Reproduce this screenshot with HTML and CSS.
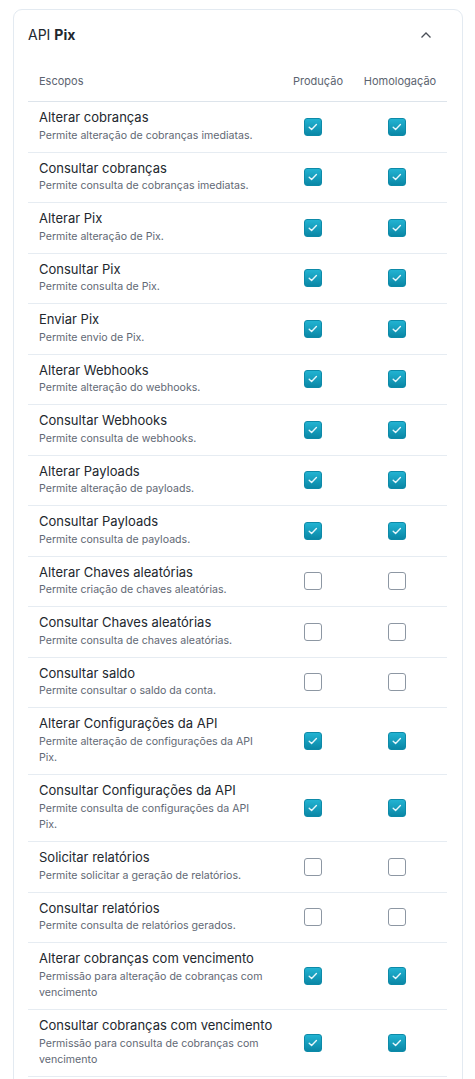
FILE: index.html
```html
<!DOCTYPE html>
<html lang="pt-BR">
<head>
<meta charset="utf-8">
<title>API Pix</title>
<link rel="stylesheet" href="styles.css">
</head>
<body>
<section class="card">
  <header class="card-head">
    <h2 class="card-title">API <b>Pix</b></h2>
    <button class="toggle" aria-label="Recolher">
      <svg width="12" height="8" viewBox="0 0 12 8"><path d="M1.5 6.5 L6 2 L10.5 6.5" fill="none" stroke="#4a4f57" stroke-width="1.3"/></svg>
    </button>
  </header>
  <div class="scopes">
    <div class="row head">
      <div class="c-name">Escopos</div>
      <div class="c-prod">Produção</div>
      <div class="c-hom">Homologação</div>
    </div>

    <div class="row"><div class="c-name"><div class="t">Alterar cobranças</div><div class="d">Permite alteração de cobranças imediatas.</div></div><div class="c-prod"><span class="cb on"></span></div><div class="c-hom"><span class="cb on"></span></div></div>
    <div class="row"><div class="c-name"><div class="t">Consultar cobranças</div><div class="d">Permite consulta de cobranças imediatas.</div></div><div class="c-prod"><span class="cb on"></span></div><div class="c-hom"><span class="cb on"></span></div></div>
    <div class="row"><div class="c-name"><div class="t">Alterar Pix</div><div class="d">Permite alteração de Pix.</div></div><div class="c-prod"><span class="cb on"></span></div><div class="c-hom"><span class="cb on"></span></div></div>
    <div class="row"><div class="c-name"><div class="t">Consultar Pix</div><div class="d">Permite consulta de Pix.</div></div><div class="c-prod"><span class="cb on"></span></div><div class="c-hom"><span class="cb on"></span></div></div>
    <div class="row"><div class="c-name"><div class="t">Enviar Pix</div><div class="d">Permite envio de Pix.</div></div><div class="c-prod"><span class="cb on"></span></div><div class="c-hom"><span class="cb on"></span></div></div>
    <div class="row"><div class="c-name"><div class="t">Alterar Webhooks</div><div class="d">Permite alteração do webhooks.</div></div><div class="c-prod"><span class="cb on"></span></div><div class="c-hom"><span class="cb on"></span></div></div>
    <div class="row"><div class="c-name"><div class="t">Consultar Webhooks</div><div class="d">Permite consulta de webhooks.</div></div><div class="c-prod"><span class="cb on"></span></div><div class="c-hom"><span class="cb on"></span></div></div>
    <div class="row"><div class="c-name"><div class="t">Alterar Payloads</div><div class="d">Permite alteração de payloads.</div></div><div class="c-prod"><span class="cb on"></span></div><div class="c-hom"><span class="cb on"></span></div></div>
    <div class="row"><div class="c-name"><div class="t">Consultar Payloads</div><div class="d">Permite consulta de payloads.</div></div><div class="c-prod"><span class="cb on"></span></div><div class="c-hom"><span class="cb on"></span></div></div>
    <div class="row"><div class="c-name"><div class="t">Alterar Chaves aleatórias</div><div class="d">Permite criação de chaves aleatórias.</div></div><div class="c-prod"><span class="cb"></span></div><div class="c-hom"><span class="cb"></span></div></div>
    <div class="row"><div class="c-name"><div class="t">Consultar Chaves aleatórias</div><div class="d">Permite consulta de chaves aleatórias.</div></div><div class="c-prod"><span class="cb"></span></div><div class="c-hom"><span class="cb"></span></div></div>
    <div class="row"><div class="c-name"><div class="t">Consultar saldo</div><div class="d">Permite consultar o saldo da conta.</div></div><div class="c-prod"><span class="cb"></span></div><div class="c-hom"><span class="cb"></span></div></div>
    <div class="row"><div class="c-name"><div class="t">Alterar Configurações da API</div><div class="d">Permite alteração de configurações da API Pix.</div></div><div class="c-prod"><span class="cb on"></span></div><div class="c-hom"><span class="cb on"></span></div></div>
    <div class="row"><div class="c-name"><div class="t">Consultar Configurações da API</div><div class="d">Permite consulta de configurações da API Pix.</div></div><div class="c-prod"><span class="cb on"></span></div><div class="c-hom"><span class="cb on"></span></div></div>
    <div class="row"><div class="c-name"><div class="t">Solicitar relatórios</div><div class="d">Permite solicitar a geração de relatórios.</div></div><div class="c-prod"><span class="cb"></span></div><div class="c-hom"><span class="cb"></span></div></div>
    <div class="row"><div class="c-name"><div class="t">Consultar relatórios</div><div class="d">Permite consulta de relatórios gerados.</div></div><div class="c-prod"><span class="cb"></span></div><div class="c-hom"><span class="cb"></span></div></div>
    <div class="row"><div class="c-name"><div class="t">Alterar cobranças com vencimento</div><div class="d">Permissão para alteração de cobranças com vencimento</div></div><div class="c-prod"><span class="cb on"></span></div><div class="c-hom"><span class="cb on"></span></div></div>
    <div class="row"><div class="c-name"><div class="t">Consultar cobranças com vencimento</div><div class="d">Permissão para consulta de cobranças com vencimento</div></div><div class="c-prod"><span class="cb on"></span></div><div class="c-hom"><span class="cb on"></span></div></div>
  </div>
</section>
</body>
</html>
```
FILE: styles.css
```css
* { box-sizing: border-box; }
html, body { margin: 0; padding: 0; background: #fff; }
body {
  font-family: "Inter", "Noto Sans", sans-serif;
  color: #1f242b;
  overflow: hidden;
  height: 1079px;
}
.card {
  margin: 9px 12px 0 13px;
  border: 1px solid #e3eaf1;
  border-radius: 9px;
  padding: 0 15px 40px 14px;
}
.card-head {
  display: flex;
  align-items: center;
  justify-content: space-between;
  height: 48px;
  padding-top: 1px;
}
.card-title {
  margin: 0;
  font-size: 14px;
  font-weight: 400;
  color: #22272e;
}
.card-title b { font-weight: 700; }
.toggle {
  border: 0;
  background: none;
  padding: 0;
  width: 14px;
  height: 10px;
  margin-right: 14px;
  display: flex;
  align-items: center;
  justify-content: center;
}
.row {
  display: grid;
  grid-template-columns: 1fr 70px 94px;
  align-items: center;
  border-bottom: 1px solid #e6ecf2;
  padding: 7px 0 7.5px;
}
.row.head {
  padding: 15px 0 12px;
  border-bottom-color: #dde4eb;
  font-size: 11px;
  line-height: 16px;
  color: #5c6470;
}
.c-name { padding: 0 6px 0 11px; }
.c-prod, .c-hom { text-align: center; display: flex; justify-content: center; }
.row:not(.head) .c-prod { padding-right: 10px; }
.row:not(.head) .c-hom { padding-right: 6px; }
.t {
  font-size: 13px;
  line-height: 17px;
  color: #22272e;
}
.d {
  font-size: 10.6px;
  line-height: 16.5px;
  margin-top: 1.5px;
  color: #5f6874;
  padding-right: 11px;
}
.cb {
  width: 18px;
  height: 18px;
  border-radius: 3px;
  border: 1px solid #8d97a3;
  background: #fff;
  display: block;
}
.cb.on {
  border-color: #0d8aa8;
  background:
    url("data:image/svg+xml,%3Csvg xmlns='http://www.w3.org/2000/svg' width='18' height='18' viewBox='0 0 18 18'%3E%3Cpath d='M5.2 9.2 L7.6 11.4 L12.4 6.6' fill='none' stroke='%23e8f7fb' stroke-width='1.4' stroke-linecap='round' stroke-linejoin='round'/%3E%3C/svg%3E") center / 18px 18px no-repeat,
    linear-gradient(#22b3d2, #0a87a6);
}
```
